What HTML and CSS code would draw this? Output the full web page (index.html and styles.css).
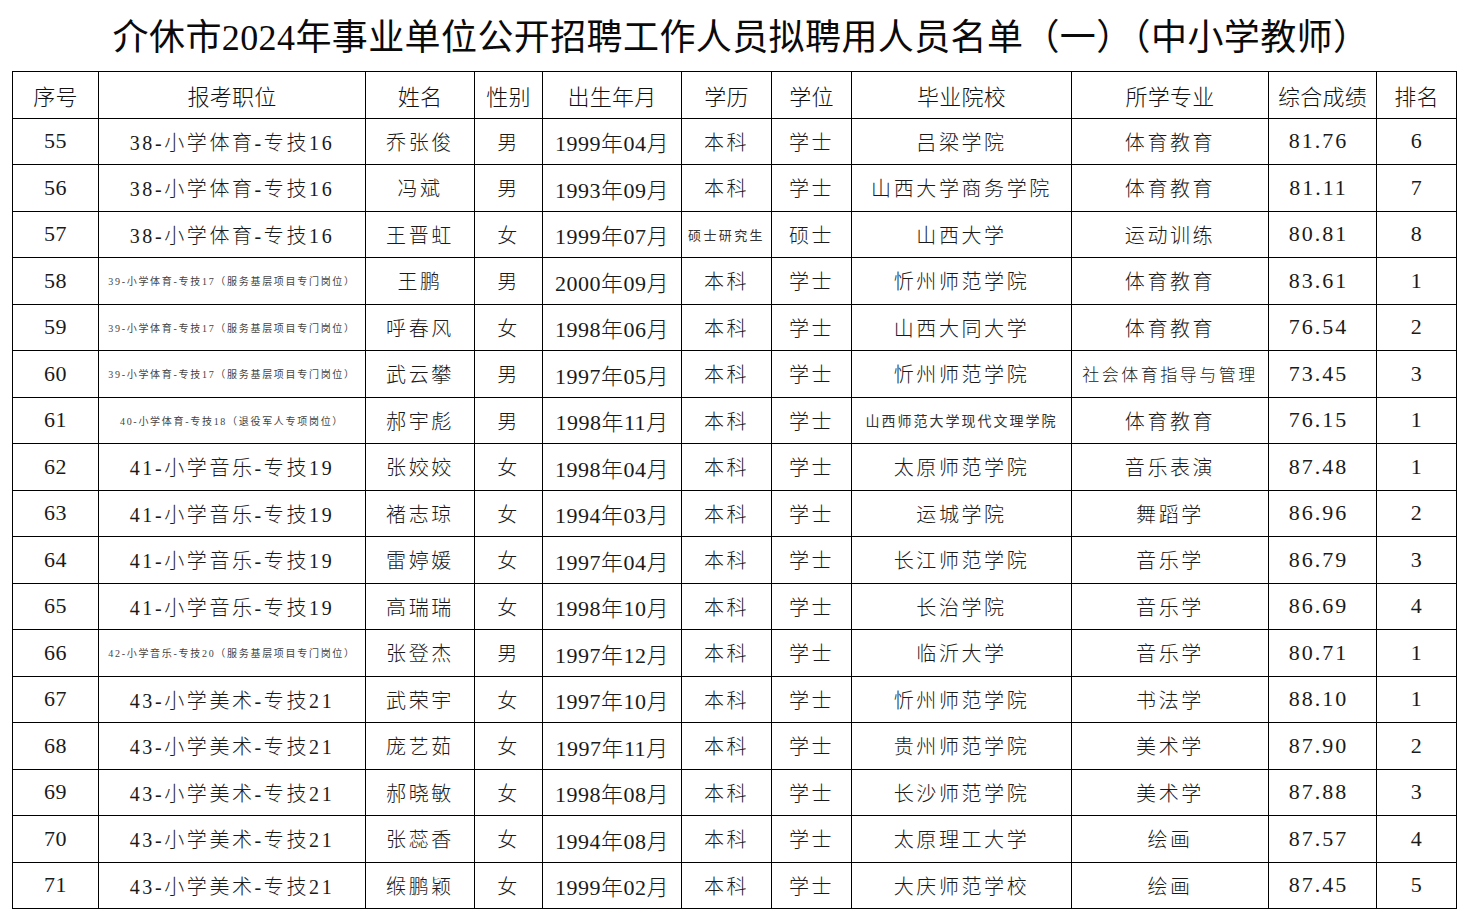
FILE: index.html
```html
<!DOCTYPE html>
<html lang="zh-CN">
<head>
<meta charset="utf-8">
<title>介休市2024年事业单位公开招聘工作人员拟聘用人员名单</title>
<link rel="stylesheet" href="styles.css">
</head>
<body>
<div class="page">
  <h1 class="title">介休市2024年事业单位公开招聘工作人员拟聘用人员名单（一）（中小学教师）</h1>
  <table class="list">
    <colgroup>
      <col class="c-no"><col class="c-pos"><col class="c-name"><col class="c-sex"><col class="c-birth"><col class="c-edu"><col class="c-deg"><col class="c-school"><col class="c-major"><col class="c-score"><col class="c-rank">
    </colgroup>
    <thead>
      <tr><th>序号</th><th>报考职位</th><th>姓名</th><th>性别</th><th>出生年月</th><th>学历</th><th>学位</th><th>毕业院校</th><th>所学专业</th><th>综合成绩</th><th>排名</th></tr>
    </thead>
    <tbody>
      <tr><td class="num">55</td><td>38-小学体育-专技16</td><td>乔张俊</td><td>男</td><td class="num">1999年04月</td><td>本科</td><td>学士</td><td>吕梁学院</td><td>体育教育</td><td class="score">81.76</td><td class="num">6</td></tr>
      <tr><td class="num">56</td><td>38-小学体育-专技16</td><td>冯斌</td><td>男</td><td class="num">1993年09月</td><td>本科</td><td>学士</td><td>山西大学商务学院</td><td>体育教育</td><td class="score">81.11</td><td class="num">7</td></tr>
      <tr><td class="num">57</td><td>38-小学体育-专技16</td><td>王晋虹</td><td>女</td><td class="num">1999年07月</td><td class="sm-edu">硕士研究生</td><td>硕士</td><td>山西大学</td><td>运动训练</td><td class="score">80.81</td><td class="num">8</td></tr>
      <tr><td class="num">58</td><td class="tiny">39-小学体育-专技17（服务基层项目专门岗位）</td><td>王鹏</td><td>男</td><td class="num">2000年09月</td><td>本科</td><td>学士</td><td>忻州师范学院</td><td>体育教育</td><td class="score">83.61</td><td class="num">1</td></tr>
      <tr><td class="num">59</td><td class="tiny">39-小学体育-专技17（服务基层项目专门岗位）</td><td>呼春风</td><td>女</td><td class="num">1998年06月</td><td>本科</td><td>学士</td><td>山西大同大学</td><td>体育教育</td><td class="score">76.54</td><td class="num">2</td></tr>
      <tr><td class="num">60</td><td class="tiny">39-小学体育-专技17（服务基层项目专门岗位）</td><td>武云攀</td><td>男</td><td class="num">1997年05月</td><td>本科</td><td>学士</td><td>忻州师范学院</td><td class="sm-major">社会体育指导与管理</td><td class="score">73.45</td><td class="num">3</td></tr>
      <tr><td class="num">61</td><td class="tiny">40-小学体育-专技18（退役军人专项岗位）</td><td>郝宇彪</td><td>男</td><td class="num">1998年11月</td><td>本科</td><td>学士</td><td class="sm-school">山西师范大学现代文理学院</td><td>体育教育</td><td class="score">76.15</td><td class="num">1</td></tr>
      <tr><td class="num">62</td><td>41-小学音乐-专技19</td><td>张姣姣</td><td>女</td><td class="num">1998年04月</td><td>本科</td><td>学士</td><td>太原师范学院</td><td>音乐表演</td><td class="score">87.48</td><td class="num">1</td></tr>
      <tr><td class="num">63</td><td>41-小学音乐-专技19</td><td>褚志琼</td><td>女</td><td class="num">1994年03月</td><td>本科</td><td>学士</td><td>运城学院</td><td>舞蹈学</td><td class="score">86.96</td><td class="num">2</td></tr>
      <tr><td class="num">64</td><td>41-小学音乐-专技19</td><td>雷婷媛</td><td>女</td><td class="num">1997年04月</td><td>本科</td><td>学士</td><td>长江师范学院</td><td>音乐学</td><td class="score">86.79</td><td class="num">3</td></tr>
      <tr><td class="num">65</td><td>41-小学音乐-专技19</td><td>高瑞瑞</td><td>女</td><td class="num">1998年10月</td><td>本科</td><td>学士</td><td>长治学院</td><td>音乐学</td><td class="score">86.69</td><td class="num">4</td></tr>
      <tr><td class="num">66</td><td class="tiny">42-小学音乐-专技20（服务基层项目专门岗位）</td><td>张登杰</td><td>男</td><td class="num">1997年12月</td><td>本科</td><td>学士</td><td>临沂大学</td><td>音乐学</td><td class="score">80.71</td><td class="num">1</td></tr>
      <tr><td class="num">67</td><td>43-小学美术-专技21</td><td>武荣宇</td><td>女</td><td class="num">1997年10月</td><td>本科</td><td>学士</td><td>忻州师范学院</td><td>书法学</td><td class="score">88.10</td><td class="num">1</td></tr>
      <tr><td class="num">68</td><td>43-小学美术-专技21</td><td>庞艺茹</td><td>女</td><td class="num">1997年11月</td><td>本科</td><td>学士</td><td>贵州师范学院</td><td>美术学</td><td class="score">87.90</td><td class="num">2</td></tr>
      <tr><td class="num">69</td><td>43-小学美术-专技21</td><td>郝晓敏</td><td>女</td><td class="num">1998年08月</td><td>本科</td><td>学士</td><td>长沙师范学院</td><td>美术学</td><td class="score">87.88</td><td class="num">3</td></tr>
      <tr><td class="num">70</td><td>43-小学美术-专技21</td><td>张蕊香</td><td>女</td><td class="num">1994年08月</td><td>本科</td><td>学士</td><td>太原理工大学</td><td>绘画</td><td class="score">87.57</td><td class="num">4</td></tr>
      <tr><td class="num">71</td><td>43-小学美术-专技21</td><td>缑鹏颖</td><td>女</td><td class="num">1999年02月</td><td>本科</td><td>学士</td><td>大庆师范学校</td><td>绘画</td><td class="score">87.45</td><td class="num">5</td></tr>
    </tbody>
  </table>
</div>
</body>
</html>
```
FILE: styles.css
```css
html, body {
  margin: 0;
  padding: 0;
  background: #ffffff;
}

body {
  font-family: "Liberation Serif", "Noto Sans CJK SC", serif;
  color: #111111;
}

.page {
  width: 1469px;
  padding: 0 0 0 12px;
  box-sizing: border-box;
}

.title {
  margin: 0;
  height: 71px;
  line-height: 76px;
  font-size: 36px;
  font-weight: normal;
  text-align: center;
  width: 1444px;
  padding-left: 14px;
  box-sizing: border-box;
  letter-spacing: 0.4px;
  color: #0a0a0a;
}

.list {
  border-collapse: collapse;
  table-layout: fixed;
  width: 1444px;
}

.c-no { width: 86px; }
.c-pos { width: 267px; }
.c-name { width: 109px; }
.c-sex { width: 68px; }
.c-birth { width: 139px; }
.c-edu { width: 90px; }
.c-deg { width: 80px; }
.c-school { width: 220px; }
.c-major { width: 197px; }
.c-score { width: 108px; }
.c-rank { width: 80px; }

.list th,
.list td {
  border: 1.5px solid #000000;
  height: 46.5px;
  padding: 0;
  text-align: center;
  vertical-align: middle;
  white-space: nowrap;
  overflow: hidden;
  box-sizing: border-box;
}

.list th {
  font-weight: 300;
  font-size: 22px;
  letter-spacing: 0.3px;
  color: #111111;
}

.list td {
  font-size: 20px;
  font-weight: 300;
  letter-spacing: 2.6px;
  color: #1a1a1a;
}

.list td.num {
  font-size: 22px;
  letter-spacing: 0.5px;
}

.list td.score {
  font-size: 22px;
  letter-spacing: 2px;
  padding-right: 8px;
}

.list td.tiny {
  font-size: 10px;
  font-weight: normal;
  letter-spacing: 1.7px;
  color: #444444;
}

.list td.sm-edu {
  font-size: 13px;
  font-weight: normal;
  letter-spacing: 2.4px;
  color: #333333;
}

.list td.sm-school {
  font-size: 14px;
  font-weight: normal;
  letter-spacing: 2px;
  color: #333333;
}

.list td.sm-major {
  font-size: 17px;
  letter-spacing: 2.5px;
}
```
